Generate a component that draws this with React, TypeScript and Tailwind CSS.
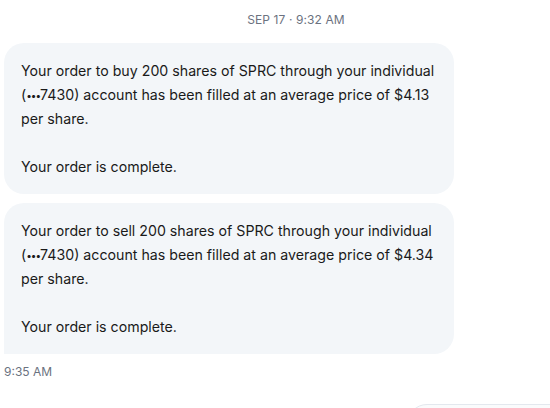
import React from "react";

const font = { fontFamily: "Inter, 'Noto Sans', sans-serif" };

function Bubble({ action, price, last }: { action: string; price: string; last?: boolean }) {
  return (
    <div
      className={`w-[450px] bg-[#f3f6f9] px-[17px] pt-[16px] pb-[15px] text-[14.2px] leading-[24px] text-[#1a1a1a] rounded-[20px] ${
        last ? "rounded-bl-none" : ""
      }`}
    >
      <p>
        Your order to {action} 200 shares of SPRC through your individual (<span className="text-[10px] tracking-[-1px] align-[1px]">•••</span>7430) account has been filled at an
        average price of {price} per share.
      </p>
      <p className="h-[24px]"></p>
      <p>Your order is complete.</p>
    </div>
  );
}

export default function App() {
  return (
    <div className="w-[550px] h-[408px] overflow-hidden bg-white relative" style={font}>
      <div className="flex justify-center pl-[42px] pt-[12px] pb-[15px]">
        <span className="text-[12px] leading-[16px] text-[#6b7280] tracking-[0.1px]">SEP 17 · 9:32 AM</span>
      </div>
      <div className="flex flex-col gap-[9px] pl-[4px]">
        <Bubble action="buy" price="$4.13" />
        <Bubble action="sell" price="$4.34" last />
      </div>
      <div className="pl-[4px] pt-[10px] text-[12px] leading-[16px] text-[#6b7280]">9:35 AM</div>
      <div className="absolute left-[407px] top-[404px] w-[200px] h-[40px] rounded-[20px] border border-[#e3e8ee] bg-[#fafbfc]"></div>
    </div>
  );
}
